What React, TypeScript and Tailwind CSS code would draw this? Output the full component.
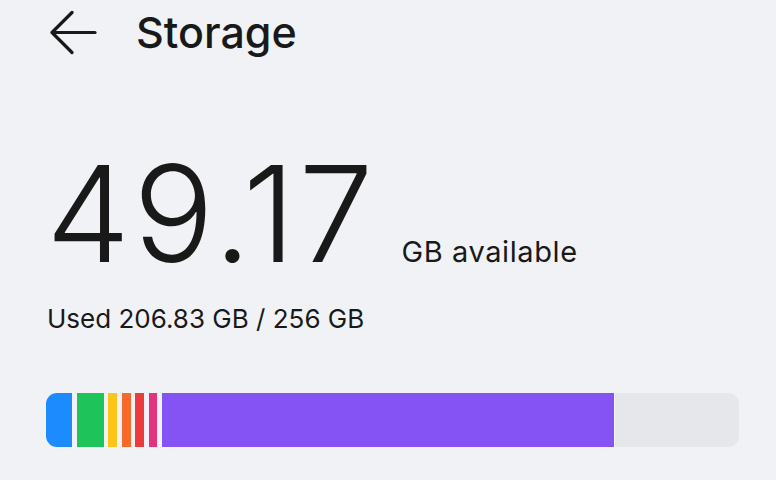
import React from "react";

export default function App() {
  return (
    <div
      className="w-[776px] h-[480px] bg-[#f1f2f5] text-[#191919] overflow-hidden"
      style={{ fontFamily: "Inter, 'Noto Sans', sans-serif" }}
    >
      <div className="flex items-start">
        <svg
          className="ml-[50px] mt-[10px] shrink-0"
          width="48"
          height="45"
          viewBox="0 0 48 45"
          fill="none"
          stroke="#191919"
          strokeWidth="3.2"
          strokeLinecap="round"
          strokeLinejoin="round"
        >
          <path d="M45 22.5H3" />
          <path d="M22 2.5L2 22.5L22 42.5" />
        </svg>
        <div className="ml-[38px] mt-[11px] text-[43px] font-medium leading-none">Storage</div>
      </div>
      <div className="pl-[46px] mt-[91px] flex items-baseline">
        <div className="text-[134px] font-light leading-none tracking-[3px]">49.17</div>
        <div className="ml-[25px] text-[29px] leading-none tracking-[0.6px]">GB available</div>
      </div>
      <div className="pl-[47px] mt-[26px] text-[26px] leading-none">Used 206.83 GB / 256 GB</div>
      <div className="ml-[46px] w-[693px] mt-[61px] h-[54px] rounded-[11px] overflow-hidden flex">
        <div className="w-[26px] bg-[#1b8bfd]" />
        <div className="w-[27px] ml-[5px] bg-[#1ec45a]" />
        <div className="w-[9px] ml-[4px] bg-[#fdc41a]" />
        <div className="w-[9px] ml-[5px] bg-[#f7692b]" />
        <div className="w-[9px] ml-[4px] bg-[#ec3a3d]" />
        <div className="w-[8px] ml-[5px] bg-[#e4337e]" />
        <div className="w-[452px] ml-[5px] bg-[#8553f3]" />
        <div className="w-[1px] bg-[#f4f4f7]" />
        <div className="flex-1 bg-[#e6e7ea]" />
      </div>
    </div>
  );
}
